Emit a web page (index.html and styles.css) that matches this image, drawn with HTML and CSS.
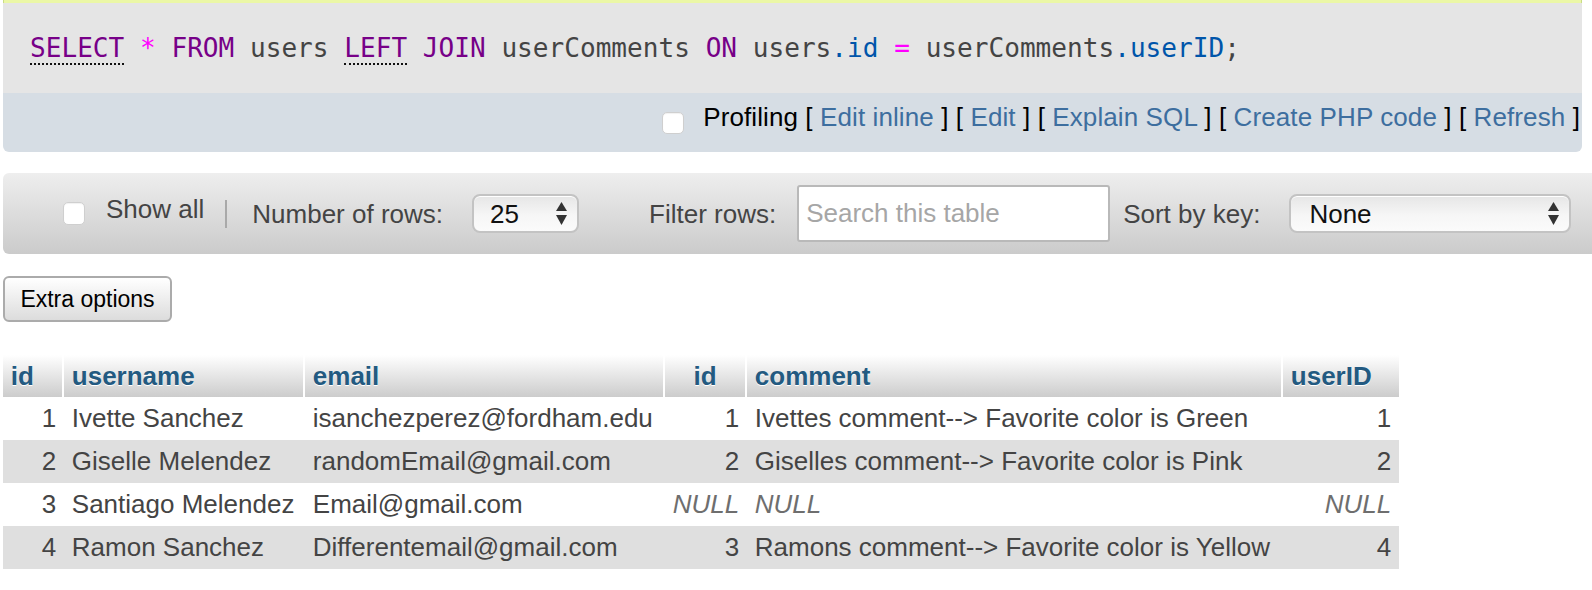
FILE: index.html
```html
<!DOCTYPE html>
<html>
<head>
<meta charset="utf-8">
<title>phpMyAdmin result</title>
<link rel="stylesheet" href="styles.css">
</head>
<body>
<div class="msgstrip"></div>
<div class="sqlbox">
  <div class="sqlcode"><span class="kw doc">SELECT</span> <span class="op">*</span> <span class="kw">FROM</span> <span class="ident">users</span> <span class="kw doc">LEFT</span> <span class="kw">JOIN</span> <span class="ident">userComments</span> <span class="kw">ON</span> <span class="ident">users</span><span class="var2">.id</span> <span class="op">=</span> <span class="ident">userComments</span><span class="var2">.userID</span><span class="ident">;</span></div>
  <div class="tools">
    <span class="chk profchk"></span>
    <span class="toolstext">Profiling [ <a class="lnk">Edit inline</a> ] [ <a class="lnk">Edit</a> ] [ <a class="lnk">Explain SQL</a> ] [ <a class="lnk">Create PHP code</a> ] [ <a class="lnk">Refresh</a> ]</span>
  </div>
</div>

<div class="navbar">
  <span class="chk navchk"></span>
  <span class="lbl showall">Show all</span>
  <span class="sep"></span>
  <span class="lbl numrows">Number of rows:</span>
  <div class="fakeselect sel25">
    <span class="selval">25</span>
    <svg class="arrows" width="11" height="23" viewBox="0 0 11 23"><polygon points="0,9 5.5,0 11,9" fill="#333"/><polygon points="0,13 11,13 5.5,23" fill="#333"/></svg>
  </div>
  <span class="lbl filter">Filter rows:</span>
  <input class="search" type="text" placeholder="Search this table">
  <span class="lbl sortby">Sort by key:</span>
  <div class="fakeselect selnone">
    <span class="selval">None</span>
    <svg class="arrows" width="11" height="23" viewBox="0 0 11 23"><polygon points="0,9 5.5,0 11,9" fill="#333"/><polygon points="0,13 11,13 5.5,23" fill="#333"/></svg>
  </div>
</div>

<button class="extra">Extra options</button>

<table class="data">
  <colgroup>
    <col class="w1"><col class="w2"><col class="w3"><col class="w4"><col class="w5"><col class="w6">
  </colgroup>
  <thead>
    <tr><th>id</th><th>username</th><th>email</th><th class="mid">id</th><th>comment</th><th class="last">userID</th></tr>
  </thead>
  <tbody>
    <tr class="odd"><td class="num">1</td><td>Ivette Sanchez</td><td>isanchezperez@fordham.edu</td><td class="num">1</td><td>Ivettes comment--&gt; Favorite color is Green</td><td class="num">1</td></tr>
    <tr class="even"><td class="num">2</td><td>Giselle Melendez</td><td>randomEmail@gmail.com</td><td class="num">2</td><td>Giselles comment--&gt; Favorite color is Pink</td><td class="num">2</td></tr>
    <tr class="odd"><td class="num">3</td><td>Santiago Melendez</td><td>Email@gmail.com</td><td class="num null">NULL</td><td class="null">NULL</td><td class="num null">NULL</td></tr>
    <tr class="even"><td class="num">4</td><td>Ramon Sanchez</td><td>Differentemail@gmail.com</td><td class="num">3</td><td>Ramons comment--&gt; Favorite color is Yellow</td><td class="num">4</td></tr>
  </tbody>
</table>
</body>
</html>
```

FILE: styles.css
```css
html, body {
  margin: 0;
  padding: 0;
  background: #fff;
}
body {
  font-family: "Liberation Sans", Arial, sans-serif;
  font-size: 26px;
  color: #444;
  overflow: hidden;
}

.msgstrip {
  height: 3px;
  margin: 0 10px 0 3px;
  background: #ebf7a6;
  border-left: 1px solid #c9dc86;
  border-right: 1px solid #c9dc86;
}

.sqlbox {
  margin: 0 10px 0 3px;
  border-radius: 0 0 6px 6px;
  overflow: hidden;
}
.sqlcode {
  box-sizing: border-box;
  height: 90px;
  padding: 30px 0 0 27px;
  background: #e5e5e5;
  font-family: "DejaVu Sans Mono", "Liberation Mono", monospace;
  font-size: 26.1px;
  white-space: pre;
  color: #444;
}
.kw { color: #770088; }
.op { color: #ff00ff; }
.ident { color: #444; }
.var2 { color: #0055aa; }
.doc { border-bottom: 2px dotted #111; }

.tools {
  box-sizing: border-box;
  height: 59px;
  background: #d6dde4;
  display: flex;
  justify-content: flex-end;
  align-items: flex-start;
  padding-right: 2px;
}
.toolstext {
  color: #000;
  padding-top: 9px;
  line-height: 30px;
  letter-spacing: 0.1px;
  white-space: pre;
}
.lnk { color: #3d6e9f; text-decoration: none; }

.chk {
  box-sizing: border-box;
  width: 22px;
  height: 22px;
  background: #fff;
  border: 1px solid #cfcfcf;
  border-radius: 5px;
  box-shadow: inset 0 1px 1px rgba(0,0,0,0.06);
  flex: none;
}
.profchk { margin-top: 19px; margin-right: 19px; }

.navbar {
  box-sizing: border-box;
  height: 81px;
  margin: 21px 0 0 3px;
  border-radius: 6px 0 0 6px;
  background: linear-gradient(to bottom, #eeeeee, #cbcbcb);
  display: flex;
  align-items: center;
  padding-left: 60px;
}
.navchk { width: 22px; height: 23px; }
.lbl {
  line-height: 30px;
  white-space: pre;
  color: #444;
  flex: none;
}
.showall { margin-left: 21px; margin-bottom: 10px; }
.sep {
  width: 2px;
  height: 28px;
  background: #a9a9a9;
  margin-left: 21px;
  flex: none;
}
.numrows { margin-left: 25px; }
.fakeselect {
  box-sizing: border-box;
  height: 39px;
  border: 2px solid #c3c3c3;
  border-radius: 8px;
  background: linear-gradient(to bottom, #e6e6e6, #f6f6f6 55%, #fbfbfb);
  box-shadow: inset 0 1px 0 #fff;
  display: flex;
  align-items: center;
  justify-content: space-between;
  padding: 0 10px 0 16px;
  color: #111;
  flex: none;
}
.selval { line-height: 30px; }
.arrows { display: block; }
.sel25 { width: 107px; margin-left: 29px; }
.filter { margin-left: 70px; }
.search {
  box-sizing: border-box;
  width: 313px;
  height: 57px;
  margin: 0 0 0 21px;
  border: 2px solid #b9b9b9;
  border-radius: 3px;
  background: #fff;
  padding: 0 7px;
  font-family: "Liberation Sans", Arial, sans-serif;
  font-size: 26px;
  color: #333;
  outline: none;
  flex: none;
}
.search::placeholder { color: #a6a6a6; }
.sortby { margin-left: 13px; }
.selnone { width: 282px; margin-left: 29px; padding-left: 18px; }

.extra {
  display: block;
  box-sizing: border-box;
  width: 169px;
  height: 46px;
  margin: 22px 0 0 3px;
  padding: 0;
  border: 2px solid #ababab;
  border-radius: 6px;
  background: linear-gradient(to bottom, #ffffff, #dcdcdc);
  font-family: "Liberation Sans", Arial, sans-serif;
  font-size: 23px;
  color: #000;
}

.data {
  margin: 33px 0 0 3px;
  border-collapse: separate;
  border-spacing: 0;
  table-layout: fixed;
  width: 1396px;
}
.w1 { width: 61px; }
.w2 { width: 241px; }
.w3 { width: 360px; }
.w4 { width: 82px; }
.w5 { width: 536px; }
.w6 { width: 116px; }
.data th {
  height: 42px;
  padding: 0 7.8px;
  text-align: left;
  font-weight: bold;
  color: #235a81;
  text-shadow: 0 1px 0 #fff;
  background: linear-gradient(to bottom, #ffffff, #cccccc);
  border-right: 2px solid #fff;
  white-space: nowrap;
  vertical-align: middle;
}
.data th.mid { text-align: center; }
.data th.last { border-right: none; }
.data td {
  height: 43px;
  padding: 0 7.8px;
  white-space: nowrap;
  vertical-align: middle;
  color: #444;
}
.data tr.even td { background: #dfdfdf; }
.data tr.odd td { background: #fff; }
.data td.num { text-align: right; }
.data td.null { font-style: italic; color: #6e6e6e; }
```
